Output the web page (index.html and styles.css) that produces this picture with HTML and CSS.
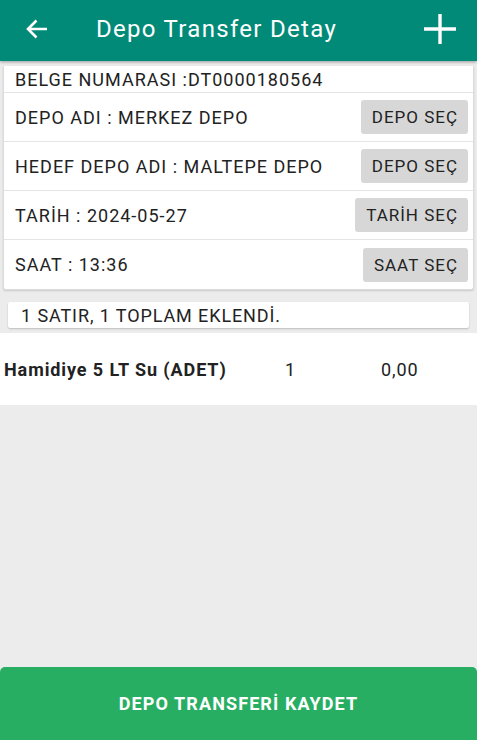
FILE: index.html
```html
<!DOCTYPE html>
<html lang="tr">
<head>
<meta charset="utf-8">
<title>Depo Transfer Detay</title>
<link rel="stylesheet" href="styles.css">
</head>
<body>
<div class="screen">
  <header class="appbar">
    <svg class="back" width="22" height="20" viewBox="0 0 22 20" aria-hidden="true">
      <path d="M21 10H2.5M10.5 1.5L2 10l8.5 8.5" fill="none" stroke="#fff" stroke-width="2.6"/>
    </svg>
    <h1 class="title">Depo Transfer Detay</h1>
    <svg class="plus" width="32" height="30" viewBox="0 0 32 30" aria-hidden="true">
      <path d="M16 0v30M0 15h32" fill="none" stroke="#fff" stroke-width="3.4"/>
    </svg>
  </header>

  <section class="card">
    <div class="row row-short"><span class="label">BELGE NUMARASI :DT0000180564</span></div>
    <div class="row"><span class="label">DEPO ADI : MERKEZ DEPO</span><button class="pick">DEPO SEÇ</button></div>
    <div class="row"><span class="label">HEDEF DEPO ADI : MALTEPE DEPO</span><button class="pick">DEPO SEÇ</button></div>
    <div class="row"><span class="label">TARİH : 2024-05-27</span><button class="pick">TARİH SEÇ</button></div>
    <div class="row"><span class="label">SAAT : 13:36</span><button class="pick">SAAT SEÇ</button></div>
  </section>

  <div class="notice">1 SATIR, 1 TOPLAM EKLENDİ.</div>

  <div class="list">
    <div class="item">
      <span class="item-name">Hamidiye 5 LT Su (ADET)</span>
      <span class="item-qty">1</span>
      <span class="item-price">0,00</span>
    </div>
  </div>

  <div class="spacer"></div>

  <button class="save">DEPO TRANSFERİ KAYDET</button>
</div>
</body>
</html>
```

FILE: styles.css
```css
* { box-sizing: border-box; }
html, body { margin: 0; padding: 0; }
body {
  background: #ececec;
  font-family: Roboto, "Noto Sans", "Liberation Sans", sans-serif;
  color: #222;
}
.screen {
  display: flex;
  flex-direction: column;
  height: 740px;
}
.appbar {
  height: 61px;
  flex: none;
  background: #028a78;
  display: flex;
  align-items: center;
  box-shadow: 0 1px 3px rgba(0,0,0,0.35);
  position: relative;
  z-index: 1;
}
.back { margin-left: 26px; margin-top: -3px; flex: none; }
.title {
  margin: -3px 0 0 48px;
  font-weight: 400;
  font-size: 24px;
  letter-spacing: 1.3px;
  color: #fff;
  flex: 1;
}
.plus { margin-right: 21px; margin-top: -4px; flex: none; }

.card {
  margin: 5px 3px 0;
  background: #fff;
  border: 1px solid #dcdcdc;
  border-top: 0;
  border-radius: 0 0 3px 3px;
  box-shadow: 0 1px 2px rgba(0,0,0,0.15);
}
.row {
  height: 49px;
  display: flex;
  align-items: center;
  justify-content: space-between;
  padding: 0 5px 0 11px;
  border-bottom: 1px solid #e4e4e4;
}
.row:last-child { border-bottom: 0; }
.row-short { height: 27px; align-items: center; padding-top: 1px; }
.label { font-size: 18px; letter-spacing: 1px; color: #222; }
.pick {
  font-family: inherit;
  font-size: 17px;
  letter-spacing: 1px;
  color: #222;
  background: #d7d7d7;
  border: 0;
  border-radius: 3px;
  height: 34px;
  padding: 0 10px 0 11px;
}

.notice {
  margin: 12px 8px 5px;
  height: 26px;
  background: #fff;
  border-radius: 2px;
  box-shadow: 0 1px 2px rgba(0,0,0,0.2);
  font-size: 18px;
  letter-spacing: 0.9px;
  padding-left: 13px;
  line-height: 28px;
  color: #222;
}

.list { background: #fff; }
.item {
  height: 72px;
  display: grid;
  grid-template-columns: 281px 96px 1fr;
  align-items: center;
  padding-left: 4px;
  font-size: 18px;
  letter-spacing: 0.9px;
}
.item-name { font-weight: 700; }

.spacer { flex: 1; }

.save {
  flex: none;
  height: 73px;
  border: 0;
  border-radius: 5px 5px 0 0;
  background: #28ae62;
  color: #fff;
  font-family: inherit;
  font-weight: 700;
  font-size: 18px;
  letter-spacing: 1.1px;
}
```
